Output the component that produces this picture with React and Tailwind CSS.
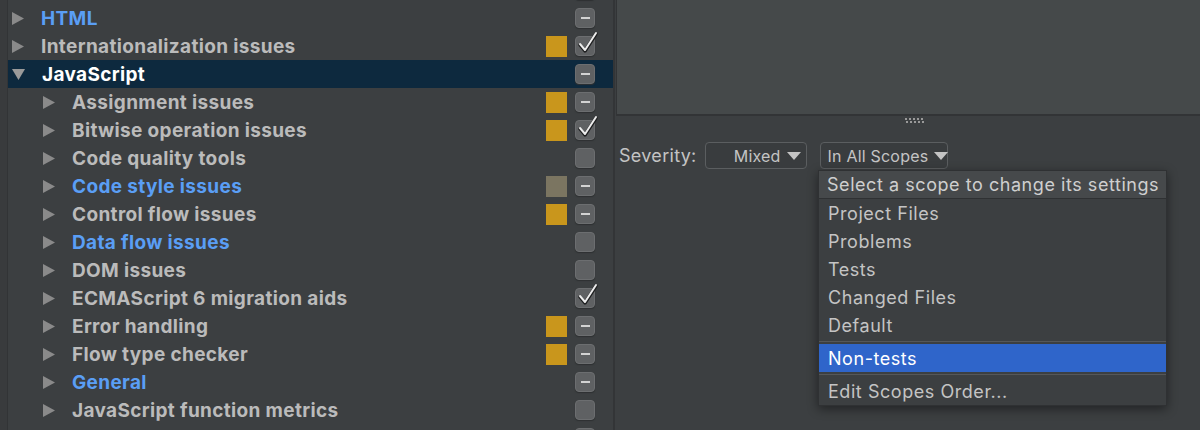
import React from "react";

const rows = [
  { label: "", level: 0, box: "minus" },
  { label: "HTML", level: 0, color: "blue", box: "minus" },
  { label: "Internationalization issues", level: 0, sev: "yellow", box: "check" },
  { label: "JavaScript", level: 0, open: true, selected: true, box: "minus" },
  { label: "Assignment issues", level: 1, sev: "yellow", box: "minus" },
  { label: "Bitwise operation issues", level: 1, sev: "yellow", box: "check" },
  { label: "Code quality tools", level: 1, box: "empty" },
  { label: "Code style issues", level: 1, color: "blue", sev: "olive", box: "minus" },
  { label: "Control flow issues", level: 1, sev: "yellow", box: "minus" },
  { label: "Data flow issues", level: 1, color: "blue", box: "empty" },
  { label: "DOM issues", level: 1, box: "empty" },
  { label: "ECMAScript 6 migration aids", level: 1, box: "check" },
  { label: "Error handling", level: 1, sev: "yellow", box: "minus" },
  { label: "Flow type checker", level: 1, sev: "yellow", box: "minus" },
  { label: "General", level: 1, color: "blue", box: "minus" },
  { label: "JavaScript function metrics", level: 1, box: "empty" },
  { label: "", level: 1, box: "minus" },
];

const scopes = ["Project Files", "Problems", "Tests", "Changed Files", "Default"];

function Arrow({ open }) {
  if (open) {
    return (
      <svg width="13" height="12" viewBox="0 0 13 12" className="shrink-0">
        <polygon points="0,1 13,1 6.5,12" fill="#9a9a9a" />
      </svg>
    );
  }
  return (
    <svg width="12" height="13" viewBox="0 0 12 13" className="shrink-0">
      <polygon points="0,0 12,6.5 0,13" fill="#8a8a8a" />
    </svg>
  );
}

function CheckBox({ kind }) {
  return (
    <div className="relative w-[20px] h-[20px] rounded-[4px] bg-[#5f6163] border border-[#6c6e70] shadow-[0_1px_1px_#2e3032] flex items-center justify-center">
      {kind === "minus" && <div className="w-[9px] h-[2px] bg-[#d2d2d2]" />}
      {kind === "check" && (
        <svg width="22" height="26" viewBox="0 0 22 26" className="absolute left-[1px] top-[-6px]">
          <polyline points="3,14 8,20 19,3" fill="none" stroke="#1e1f20" strokeWidth="3.4" strokeLinecap="round" strokeLinejoin="round" />
          <polyline points="3,13 8,19 19,2" fill="none" stroke="#ececec" strokeWidth="2" strokeLinecap="round" strokeLinejoin="round" />
        </svg>
      )}
    </div>
  );
}

function Row({ row }) {
  const textColor = row.selected
    ? "text-white"
    : row.color === "blue"
    ? "text-[#5a9ef5]"
    : "text-[#bbbbbb]";
  return (
    <div
      className={`h-[28px] flex items-center pr-[18px] ${row.selected ? "bg-[#0d293e]" : ""}`}
    >
      <div className={`flex items-center ${row.level === 0 ? "pl-[4px]" : "pl-[35px]"}`}>
        <Arrow open={row.open} />
        <span className={`ml-[17px] pt-[2px] text-[19px] font-bold tracking-[0.35px] whitespace-nowrap ${textColor}`}>
          {row.label}
        </span>
      </div>
      <div className="ml-auto flex items-center gap-[8px]">
        {row.sev === "yellow" && <div className="w-[21px] h-[21px] bg-[#c9961c]" />}
        {row.sev === "olive" && <div className="w-[21px] h-[21px] bg-[#7b7561]" />}
        <CheckBox kind={row.box} />
      </div>
    </div>
  );
}

function Dropdown({ label, width, right }) {
  return (
    <div
      className={`h-[27px] ${width} rounded-[4px] border border-[#5b5e60] bg-[#393c3e] flex items-center ${
        right ? "justify-end pr-[5px]" : "pl-[7px]"
      } gap-[6px]`}
    >
      <span className="text-[16px] tracking-[0.2px] text-[#c4c4c4] whitespace-nowrap">{label}</span>
      <svg width="14" height="8" viewBox="0 0 14 8" className="shrink-0">
        <polygon points="0,0 14,0 7,8" fill="#c4c4c4" />
      </svg>
    </div>
  );
}

export default function App() {
  return (
    <div
      className="w-[1200px] h-[430px] overflow-hidden bg-[#3c3f41] flex"
      style={{ fontFamily: "Inter, 'Liberation Sans', sans-serif" }}
    >
      <div className="w-[8px] shrink-0 bg-[#393b3d] border-r border-[#323436]" />
      <div className="w-[605px] shrink-0 overflow-hidden">
        <div className="mt-[-24px]">
          {rows.map((row, i) => (
            <Row key={i} row={row} />
          ))}
        </div>
      </div>
      <div className="w-[2px] shrink-0 bg-[#333537]" />
      <div className="flex-1 relative">
        <div className="h-[116px] ml-[1px] bg-[#45494a] border-l border-b-2 border-[#323436]" />
        <div className="flex justify-center pl-[4px] pt-[2px] h-[8px]">
          <svg width="20" height="6" viewBox="0 0 20 6" className="ml-[10px]">
            {[0, 4, 8, 12, 16].map((x) => (
              <g key={x}>
                <rect x={x} y="0" width="2" height="2" fill="#9a9a9a" />
                <rect x={x + 1} y="3" width="2" height="2" fill="#9a9a9a" />
              </g>
            ))}
          </svg>
        </div>
        <div className="flex items-center mt-[18px] pl-[4px]">
          <span className="text-[18px] tracking-[0.3px] text-[#c4c4c4]">Severity:</span>
          <div className="ml-[8px]">
            <Dropdown label="Mixed" width="w-[102px]" right />
          </div>
          <div className="ml-[13px]">
            <Dropdown label="In All Scopes" width="w-[128px]" />
          </div>
        </div>

        <div className="absolute left-[203px] top-[170px] w-[349px] bg-[#3c3f41] border border-[#2f3133] shadow-[0_3px_10px_rgba(0,0,0,0.45)] text-[18px] tracking-[0.55px] text-[#c4c4c4]">
          <div className="h-[28px] flex items-center pl-[8px] bg-[#46494b] border-b border-[#2f3133] text-[#cfcfcf] whitespace-nowrap">
            Select a scope to change its settings
          </div>
          {scopes.map((s) => (
            <div key={s} className="h-[28px] flex items-center pl-[9px]">
              {s}
            </div>
          ))}
          <div className="h-[5px] flex items-center">
            <div className="w-full h-[1px] bg-[#555759]" />
          </div>
          <div className="h-[28px] flex items-center pl-[9px] bg-[#2f65ca] text-white">
            Non-tests
          </div>
          <div className="h-[5px] flex items-center">
            <div className="w-full h-[1px] bg-[#555759]" />
          </div>
          <div className="h-[28px] flex items-center pl-[9px]">Edit Scopes Order...</div>
        </div>
      </div>
    </div>
  );
}
